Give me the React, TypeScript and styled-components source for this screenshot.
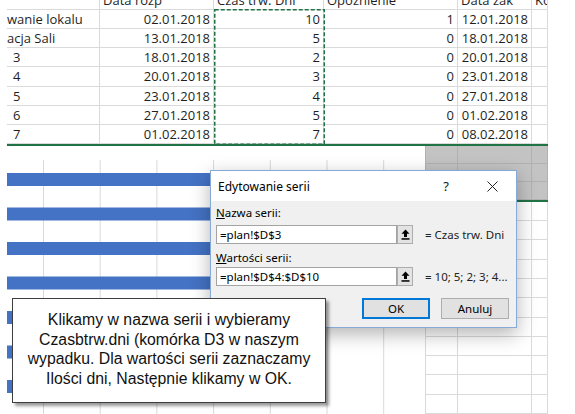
import React from 'react';
import styled, { createGlobalStyle, css } from 'styled-components';

const GlobalStyle = createGlobalStyle`
  html, body {
    margin: 0;
    padding: 0;
    background: #ffffff;
    overflow: hidden;
  }
`;

const Page = styled.div`
  position: relative;
  width: 575px;
  height: 414px;
  overflow: hidden;
  background: #ffffff;
`;

/* ---------- top spreadsheet ---------- */

const Sheet = styled.div`
  position: relative;
  margin-left: 7px;
  width: 541px;
  display: grid;
  grid-template-columns: 93px 114px 110px 134px 74px 16px;
  grid-template-rows: 10px repeat(7, 19.143px);
  font-family: 'Open Sans', 'Liberation Sans', sans-serif;
  font-size: 13px;
  color: #1f1f1f;
`;

interface CellProps {
  $align?: 'left' | 'right';
  $head?: boolean;
  $indent?: number;
}

const Cell = styled.div<CellProps>`
  box-sizing: border-box;
  border-right: 1px solid #dadada;
  border-bottom: 1px solid #dadada;
  overflow: hidden;
  white-space: nowrap;
  line-height: 19px;
  padding: 0 3px 0 ${(p) => (p.$indent ?? 3)}px;
  text-align: ${(p) => p.$align ?? 'left'};
  ${(p) =>
    p.$head &&
    css`
      & > span {
        display: block;
        margin-top: -9px;
      }
    `}
`;

const Marquee = styled.svg`
  position: absolute;
  left: 207px;
  top: 9px;
  width: 111px;
  height: 136px;
  overflow: visible;
`;

const GreenRule = styled.div<{ $width: number; $offset?: number }>`
  margin-left: ${(p) => p.$offset ?? 0}px;
  width: ${(p) => p.$width}px;
  height: 2px;
  background: #217346;
`;

/* ---------- lower part: chart + cells ---------- */

const Lower = styled.div`
  display: flex;
  height: 268px;
`;

const Chart = styled.svg`
  margin-left: 7px;
  width: 418px;
  height: 268px;
  flex-shrink: 0;
  background: #ffffff;
`;

const SideCells = styled.div`
  width: 123px;
  display: flex;
  flex-direction: column;
`;

const CellGrid = styled.div<{ $rows: number; $rowH: number; $grey?: boolean }>`
  display: grid;
  grid-template-columns: 33px 74px 16px;
  grid-template-rows: repeat(${(p) => p.$rows}, ${(p) => p.$rowH}px);
  background: ${(p) => (p.$grey ? '#c3c3c3' : '#ffffff')};
`;

const PlainCell = styled.div<{ $grey?: boolean; $first?: boolean }>`
  box-sizing: border-box;
  border-right: 1px solid ${(p) => (p.$grey ? '#b1b1b1' : '#dadada')};
  border-bottom: 1px solid ${(p) => (p.$grey ? '#b1b1b1' : '#dadada')};
  ${(p) => p.$first && css`border-left: 1px solid ${p.$grey ? '#b1b1b1' : '#dadada'};`}
`;

/* ---------- dialog ---------- */

const Dialog = styled.div`
  position: absolute;
  left: 210px;
  top: 170px;
  width: 307px;
  height: 158px;
  box-sizing: border-box;
  border: 1px solid #86a9d6;
  background: #f0f0f0;
  box-shadow: 0 6px 18px rgba(0, 0, 0, 0.3);
  display: flex;
  flex-direction: column;
  font-family: 'Noto Sans', 'Open Sans', sans-serif;
  font-size: 11.5px;
  color: #000000;
`;

const TitleBar = styled.div`
  height: 30px;
  background: #ffffff;
  display: flex;
  align-items: center;
  padding: 0 1px 0 7px;
`;

const Title = styled.div`
  flex: 1;
  font-size: 12px;
  color: #000;
`;

const TitleButton = styled.div`
  width: 46px;
  height: 30px;
  display: flex;
  align-items: center;
  justify-content: center;
  font-size: 13px;
  color: #111;
`;

const DialogBody = styled.div`
  padding: 4px 7px 8px 5px;
  display: flex;
  flex-direction: column;
`;

const Label = styled.div<{ $gap?: number }>`
  line-height: 16px;
  margin-top: ${(p) => p.$gap ?? 0}px;
  color: #000;
`;

const InputRow = styled.div<{ $gap: number }>`
  display: flex;
  align-items: center;
  margin-top: ${(p) => p.$gap}px;
`;

const Input = styled.div`
  box-sizing: border-box;
  width: 181px;
  height: 19px;
  border: 1px solid #a3a3a3;
  background: #ffffff;
  padding-left: 3px;
  line-height: 17px;
  white-space: nowrap;
`;

const RefButton = styled.div`
  box-sizing: border-box;
  width: 16px;
  height: 19px;
  border: 1px solid #adadad;
  background: #e3e3e3;
  display: flex;
  align-items: center;
  justify-content: center;
`;

const RefValue = styled.div`
  margin-left: 12px;
  color: #222;
  white-space: nowrap;
`;

const ButtonRow = styled.div`
  display: flex;
  justify-content: flex-end;
  gap: 11px;
  margin-top: 12px;
`;

const DialogButton = styled.div<{ $primary?: boolean }>`
  box-sizing: border-box;
  width: 68px;
  height: 21px;
  display: flex;
  align-items: center;
  justify-content: center;
  background: #e1e1e1;
  border: 1px solid ${(p) => (p.$primary ? '#0078d7' : '#adadad')};
  ${(p) => p.$primary && css`box-shadow: inset 0 0 0 1px #0078d7;`}
  color: #000;
`;

/* ---------- callout ---------- */

const Callout = styled.div`
  position: absolute;
  left: 12px;
  top: 298px;
  width: 314px;
  height: 105px;
  box-sizing: border-box;
  border: 1px solid #3e3e3e;
  background: #ffffff;
  box-shadow: 3px 3px 3px rgba(0, 0, 0, 0.4);
  display: flex;
  align-items: center;
  justify-content: center;
  text-align: center;
  font-family: 'Liberation Sans', Arial, sans-serif;
  font-size: 15.8px;
  line-height: 19.5px;
  color: #111111;
  padding-bottom: 3px;
`;

const headers = ['', 'Data rozp', 'Czas trw. Dni', 'Opóźnienie', 'Data zak', 'Ko'];

const rows = [
  { name: 'wanie lokalu', indent: 0, start: '02.01.2018', days: '10', delay: '1', end: '12.01.2018' },
  { name: 'acja Sali', indent: 0, start: '13.01.2018', days: '5', delay: '0', end: '18.01.2018' },
  { name: '3', indent: 6, start: '18.01.2018', days: '2', delay: '0', end: '20.01.2018' },
  { name: '4', indent: 6, start: '20.01.2018', days: '3', delay: '0', end: '23.01.2018' },
  { name: '5', indent: 6, start: '23.01.2018', days: '4', delay: '0', end: '27.01.2018' },
  { name: '6', indent: 6, start: '27.01.2018', days: '5', delay: '0', end: '01.02.2018' },
  { name: '7', indent: 6, start: '01.02.2018', days: '7', delay: '0', end: '08.02.2018' },
];

const barWidths = [260, 280, 250, 270, 240, 250, 230];

const UploadIcon = () => (
  <svg width="9" height="11" viewBox="0 0 9 11">
    <path d="M4.5 0.5 L0.5 4.8 H3 V8 H6 V4.8 H8.5 Z" fill="#000" />
    <rect x="0.5" y="9.2" width="8" height="1.5" fill="#000" />
  </svg>
);

const CloseIcon = () => (
  <svg width="11" height="11" viewBox="0 0 11 11">
    <path d="M0.5 0.5 L10.5 10.5 M10.5 0.5 L0.5 10.5" stroke="#222" strokeWidth="1" fill="none" />
  </svg>
);

const GridCells = ({ rows: n, grey }: { rows: number; grey?: boolean }) => (
  <>
    {Array.from({ length: n * 3 }).map((_, i) => (
      <PlainCell key={i} $grey={grey} $first={i % 3 === 0} />
    ))}
  </>
);

const App = () => (
  <Page>
    <GlobalStyle />
    <Sheet>
      {headers.map((h, i) => (
        <Cell key={h + i} $head>
          <span>{h}</span>
        </Cell>
      ))}
      {rows.map((r) => (
        <React.Fragment key={r.start}>
          <Cell $indent={r.indent}>{r.name}</Cell>
          <Cell $align="right">{r.start}</Cell>
          <Cell $align="right">{r.days}</Cell>
          <Cell $align="right">{r.delay}</Cell>
          <Cell $align="right">{r.end}</Cell>
          <Cell />
        </React.Fragment>
      ))}
      <Marquee viewBox="0 0 111 136">
        <rect
          x="0.75"
          y="0.75"
          width="109.5"
          height="134.5"
          fill="none"
          stroke="#217346"
          strokeWidth="1.5"
          strokeDasharray="4 2"
        />
      </Marquee>
    </Sheet>
    <GreenRule $width={541} $offset={7} />
    <Lower>
      <Chart viewBox="0 0 418 268">
        {Array.from({ length: 7 }).map((_, i) => {
          const x = 36.5 + i * 56.7;
          return <line key={i} x1={x} y1={14} x2={x} y2={268} stroke="#d9d9d9" strokeWidth="1" />;
        })}
        {barWidths.map((w, i) => (
          <rect key={i} x={0} y={27 + i * 34.5} width={w} height={13} fill="#4472c4" />
        ))}
      </Chart>
      <SideCells>
        <CellGrid $rows={3} $rowH={18} $grey>
          <GridCells rows={3} grey />
        </CellGrid>
        <GreenRule $width={123} />
        <CellGrid $rows={11} $rowH={19.3}>
          <GridCells rows={11} />
        </CellGrid>
      </SideCells>
    </Lower>

    <Dialog>
      <TitleBar>
        <Title>Edytowanie serii</Title>
        <TitleButton>?</TitleButton>
        <TitleButton>
          <CloseIcon />
        </TitleButton>
      </TitleBar>
      <DialogBody>
        <Label>
          <u>N</u>azwa serii:
        </Label>
        <InputRow $gap={4}>
          <Input>=plan!$D$3</Input>
          <RefButton>
            <UploadIcon />
          </RefButton>
          <RefValue>= Czas trw. Dni</RefValue>
        </InputRow>
        <Label $gap={6}>
          <u>W</u>artości serii:
        </Label>
        <InputRow $gap={1}>
          <Input>=plan!$D$4:$D$10</Input>
          <RefButton>
            <UploadIcon />
          </RefButton>
          <RefValue>= 10; 5; 2; 3; 4...</RefValue>
        </InputRow>
        <ButtonRow>
          <DialogButton $primary>OK</DialogButton>
          <DialogButton>Anuluj</DialogButton>
        </ButtonRow>
      </DialogBody>
    </Dialog>

    <Callout>
      <div>
        Klikamy w nazwa serii i wybieramy
        <br />
        Czasbtrw.dni (komórka D3 w naszym
        <br />
        wypadku. Dla wartości serii zaznaczamy
        <br />
        Ilości dni, Następnie klikamy w OK.
      </div>
    </Callout>
  </Page>
);

export default App;
